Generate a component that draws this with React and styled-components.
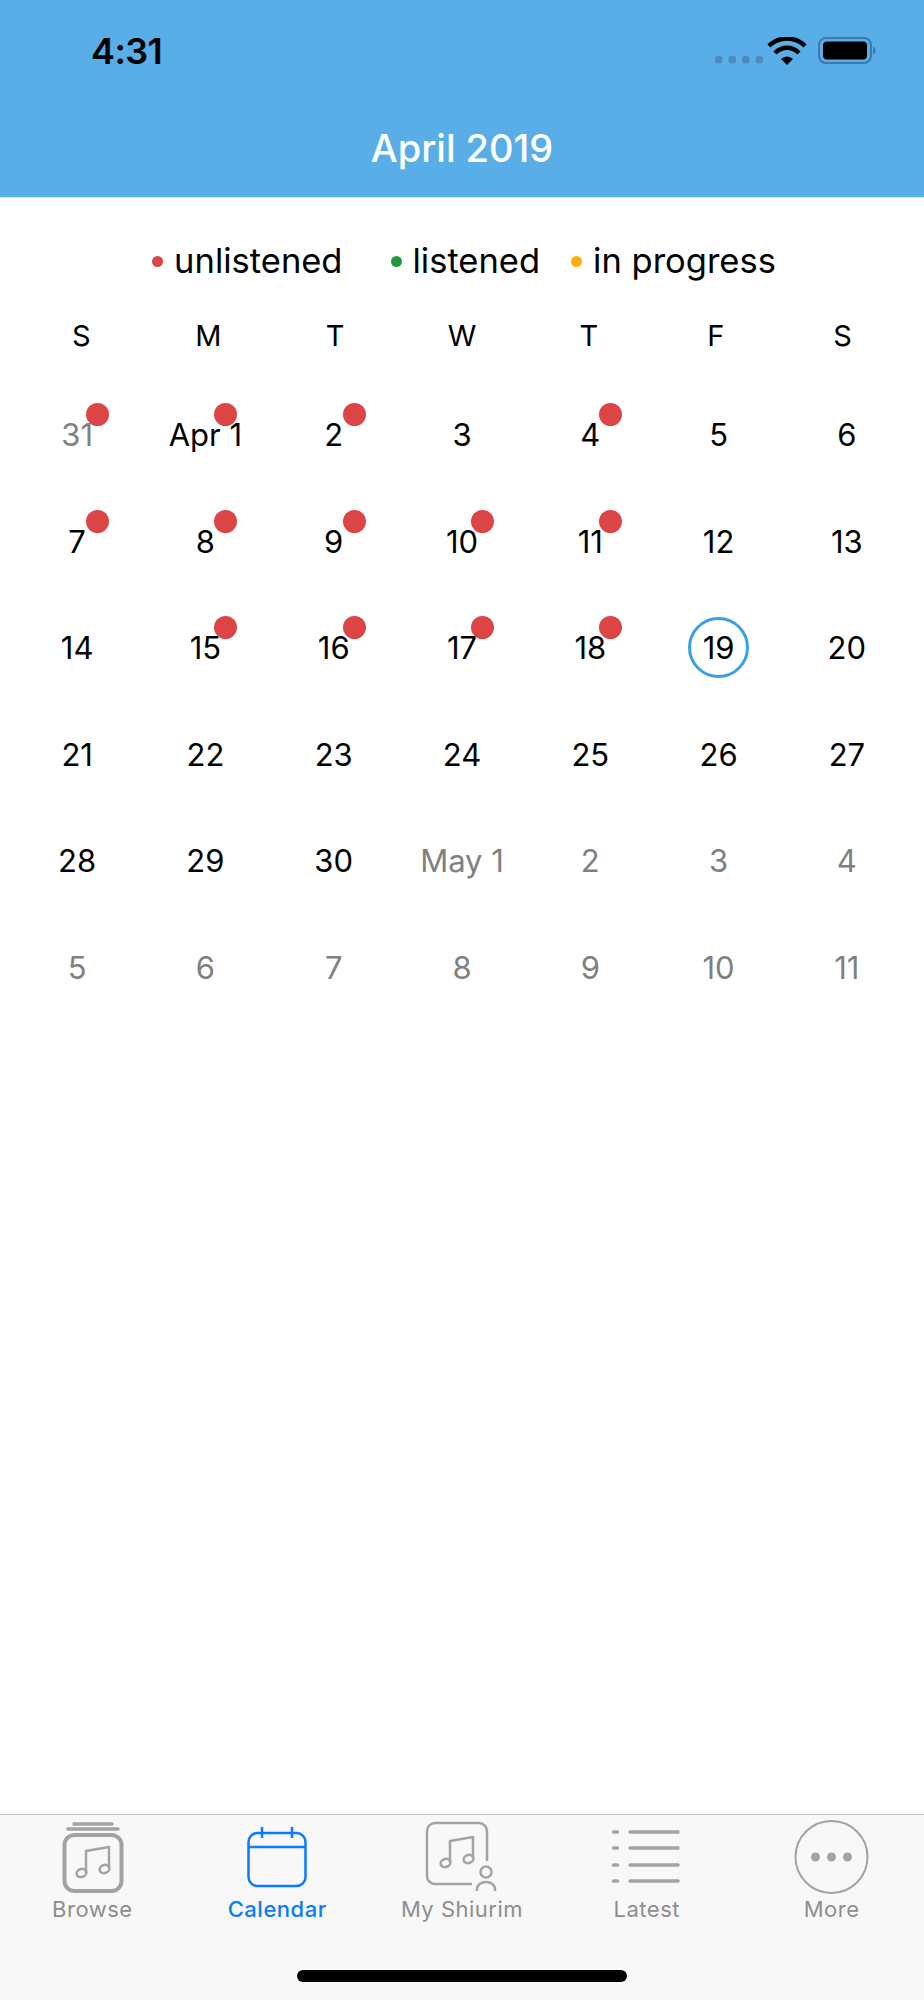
import React from "react";
import styled, { createGlobalStyle } from "styled-components";

const GlobalStyle = createGlobalStyle`
  html, body { margin: 0; padding: 0; background: #fff; }
  body { font-family: Inter, "Liberation Sans", sans-serif; }
`;

const Screen = styled.div`
  width: 924px;
  height: 2000px;
  display: flex;
  flex-direction: column;
  overflow: hidden;
  background: #fff;
`;

const Header = styled.header`
  height: 197px;
  background: #5aaee8;
  border-bottom: 1px solid #e4e4e4;
  display: flex;
  flex-direction: column;
`;

const StatusBar = styled.div`
  height: 100px;
  padding: 29px 47px 0 91px;
  box-sizing: border-box;
  display: flex;
  justify-content: space-between;
  align-items: flex-start;
`;

const Clock = styled.div`
  font-size: 36px;
  line-height: 44px;
  font-weight: 600;
  letter-spacing: -0.6px;
  color: #000;
`;

const StatusIcons = styled.div`
  display: flex;
  align-items: center;
  margin-top: 8px;
`;

const Title = styled.h1`
  margin: 0;
  text-align: center;
  font-size: 38px;
  line-height: 96px;
  font-weight: 500;
  color: #fff;
`;

const Main = styled.main`
  flex: 1;
`;

const Legend = styled.div`
  height: 124px;
  padding: 40px 0 0 4px;
  box-sizing: border-box;
  display: flex;
  justify-content: center;
`;

const LegendItem = styled.div`
  display: flex;
  align-items: center;
  height: 44px;
  font-size: 34.5px;
  color: #000;
  margin-right: ${(p) => p.$gap || 0}px;
`;

const LegendDot = styled.span`
  width: 11px;
  height: 11px;
  border-radius: 50%;
  margin-right: 11px;
  margin-top: 2px;
  background: ${(p) => p.$color};
`;

const WeekRow = styled.div`
  height: 59px;
  padding: 0 18px;
  display: grid;
  grid-template-columns: repeat(7, 1fr);
`;

const WeekLabel = styled.div`
  text-align: center;
  font-size: 29px;
  line-height: 28px;
  color: #000;
  font-weight: 400;
`;

const DayGrid = styled.div`
  padding: 0 13px;
  display: grid;
  grid-template-columns: repeat(7, 1fr);
  grid-auto-rows: 106.5px;
`;

const DayCell = styled.div`
  position: relative;
  display: flex;
  align-items: center;
  justify-content: center;
`;

const DayNumber = styled.span`
  position: relative;
  padding-top: 2px;
  font-size: 31px;
  line-height: 40px;
  font-weight: 400;
  color: ${(p) => (p.$muted ? "#808080" : "#000")};
  white-space: nowrap;
`;

const UnreadDot = styled.span`
  position: absolute;
  left: 50%;
  top: 50%;
  width: 23px;
  height: 23px;
  margin-left: 9px;
  margin-top: -31px;
  border-radius: 50%;
  background: #dc4446;
`;

const TodayRing = styled.span`
  position: absolute;
  left: 50%;
  top: 50%;
  width: 61px;
  height: 61px;
  margin: -30.5px 0 0 -30.5px;
  box-sizing: border-box;
  border: 3px solid #3a9fe6;
  border-radius: 50%;
`;

const TabBar = styled.nav`
  height: 186px;
  box-sizing: border-box;
  background: #f8f8f8;
  border-top: 1px solid #c4c4c4;
  position: relative;
  padding-top: 5px;
  display: grid;
  grid-template-columns: repeat(5, 1fr);
  align-items: start;
`;

const Tab = styled.div`
  display: flex;
  flex-direction: column;
  align-items: center;
  color: ${(p) => (p.$active ? "#0a7aff" : "#8e8e8e")};
`;

const TabIcon = styled.svg`
  width: 80px;
  height: 76px;
  display: block;
  overflow: visible;
`;

const TabLabel = styled.span`
  font-size: 22px;
  line-height: 26px;
  margin-top: 0;
  letter-spacing: 0.5px;
  font-weight: ${(p) => (p.$active ? 500 : 400)};
`;

const HomeBar = styled.div`
  position: absolute;
  left: 297px;
  bottom: 18px;
  width: 330px;
  height: 12px;
  border-radius: 6px;
  background: #000;
`;

const ICON_GREY = "#a3a3a3";

function StatusGlyphs() {
  return (
    <svg width="162" height="30" viewBox="0 0 162 30">
      {[0, 13.5, 27, 40.5].map((x) => (
        <rect key={x} x={x} y="19" width="7.5" height="7.5" rx="3" fill="#4b8bbe" />
      ))}
      <path d="M54 9 C64 -1 80 -1 90 9" fill="none" stroke="#000" strokeWidth="4.5" />
      <path d="M60 16 C67 9 77 9 84 16" fill="none" stroke="#000" strokeWidth="4.5" />
      <path d="M66 22 C70 18.500 74 18.500 78 22 L72 28 Z" fill="#000" />
      <rect x="104" y="1" width="52" height="25" rx="7" fill="none" stroke="#3e7aa8" strokeWidth="2" />
      <rect x="108" y="4.500" width="44" height="18" rx="4" fill="#000" />
      <path d="M158.500 10 C160.500 11 160.500 16 158.500 17 Z" fill="#3e7aa8" stroke="#3e7aa8" />
    </svg>
  );
}

function Notes({ x, y, w = 23, stroke = 2.5 }) {
  // two beamed notes, (x, y) is the top of the left stem
  return (
    <g fill="none" stroke={ICON_GREY} strokeWidth={stroke}>
      <path d={`M${x} ${y + 24}V${y + 2}L${x + w} ${y - 2}V${y + 19}`} strokeLinejoin="round" />
      <ellipse cx={x - 4.5} cy={y + 24} rx="5" ry="4" transform={`rotate(-20 ${x - 4.5} ${y + 24})`} />
      <ellipse cx={x + w - 4.5} cy={y + 20} rx="5" ry="4" transform={`rotate(-20 ${x + w - 4.5} ${y + 20})`} />
    </g>
  );
}

function BrowseIcon() {
  return (
    <TabIcon viewBox="0 0 80 76">
      <path d="M22 4H60" stroke={ICON_GREY} strokeWidth="3.500" strokeLinecap="round" />
      <path d="M16 9H66" stroke={ICON_GREY} strokeWidth="3.500" strokeLinecap="round" />
      <rect x="12.500" y="15" width="57" height="56" rx="10" fill="none" stroke={ICON_GREY} strokeWidth="4" />
      <Notes x={34} y={29} />
    </TabIcon>
  );
}

function CalendarIcon() {
  return (
    <TabIcon viewBox="0 0 80 76" fill="none" stroke="#0a7aff" strokeWidth="2.500">
      <rect x="11.500" y="13" width="57" height="53" rx="9" />
      <path d="M11.500 27H68.500M25 7V18M55 7V18" />
    </TabIcon>
  );
}

function ShiurimIcon() {
  return (
    <TabIcon viewBox="1 0 80 76">
      <path
        d="M66 41V11a8 8 0 0 0-8-8H14a8 8 0 0 0-8 8V56a8 8 0 0 0 8 8H51"
        fill="none"
        stroke={ICON_GREY}
        strokeWidth="2.500"
      />
      <Notes x={29} y={19} />
      <circle cx="65" cy="52" r="5.500" fill="none" stroke={ICON_GREY} strokeWidth="2.500" />
      <path d="M56 71V69a9 7 0 0 1 18 0V71" fill="none" stroke={ICON_GREY} strokeWidth="2.500" />
    </TabIcon>
  );
}

function LatestIcon() {
  return (
    <TabIcon viewBox="1 0 80 76" stroke={ICON_GREY} strokeWidth="3.500" strokeLinecap="round">
      {[12, 28, 45, 61].map((y) => (
        <g key={y}>
          <path d={`M7.500 ${y}H11.500`} />
          <path d={`M24 ${y}H72`} />
        </g>
      ))}
    </TabIcon>
  );
}

function MoreIcon() {
  return (
    <TabIcon viewBox="1 0 80 76">
      <circle cx="40.500" cy="37" r="36" fill="none" stroke={ICON_GREY} strokeWidth="2" />
      <circle cx="24.500" cy="37" r="4.500" fill={ICON_GREY} />
      <circle cx="40.500" cy="37" r="4.500" fill={ICON_GREY} />
      <circle cx="56.500" cy="37" r="4.500" fill={ICON_GREY} />
    </TabIcon>
  );
}

const legend = [
  { label: "unlistened", color: "#dc4446", gap: 48 },
  { label: "listened", color: "#23993e", gap: 31 },
  { label: "in progress", color: "#fcaf0f" },
];

const weekdays = ["S", "M", "T", "W", "T", "F", "S"];

const d = (label, extra = {}) => ({ label, ...extra });
const unread = { dot: true };
const muted = { muted: true };

const days = [
  d("31", { ...muted, ...unread }), d("Apr 1", unread), d("2", unread), d("3"), d("4", unread), d("5"), d("6"),
  d("7", unread), d("8", unread), d("9", unread), d("10", unread), d("11", unread), d("12"), d("13"),
  d("14"), d("15", unread), d("16", unread), d("17", unread), d("18", unread), d("19", { today: true }), d("20"),
  d("21"), d("22"), d("23"), d("24"), d("25"), d("26"), d("27"),
  d("28"), d("29"), d("30"), d("May 1", muted), d("2", muted), d("3", muted), d("4", muted),
  d("5", muted), d("6", muted), d("7", muted), d("8", muted), d("9", muted), d("10", muted), d("11", muted),
];

const tabs = [
  { label: "Browse", Icon: BrowseIcon },
  { label: "Calendar", Icon: CalendarIcon, active: true },
  { label: "My Shiurim", Icon: ShiurimIcon },
  { label: "Latest", Icon: LatestIcon },
  { label: "More", Icon: MoreIcon },
];

export default function App() {
  return (
    <Screen>
      <GlobalStyle />
      <Header>
        <StatusBar>
          <Clock>4:31</Clock>
          <StatusIcons>
            <StatusGlyphs />
          </StatusIcons>
        </StatusBar>
        <Title>April 2019</Title>
      </Header>
      <Main>
        <Legend>
          {legend.map((item) => (
            <LegendItem key={item.label} $gap={item.gap}>
              <LegendDot $color={item.color} />
              {item.label}
            </LegendItem>
          ))}
        </Legend>
        <WeekRow>
          {weekdays.map((day, i) => (
            <WeekLabel key={i}>{day}</WeekLabel>
          ))}
        </WeekRow>
        <DayGrid>
          {days.map((day, i) => (
            <DayCell key={i}>
              {day.today && <TodayRing />}
              <DayNumber $muted={day.muted}>{day.label}</DayNumber>
              {day.dot && <UnreadDot />}
            </DayCell>
          ))}
        </DayGrid>
      </Main>
      <TabBar>
        {tabs.map(({ label, Icon, active }) => (
          <Tab key={label} $active={active}>
            <Icon />
            <TabLabel $active={active}>{label}</TabLabel>
          </Tab>
        ))}
        <HomeBar />
      </TabBar>
    </Screen>
  );
}
